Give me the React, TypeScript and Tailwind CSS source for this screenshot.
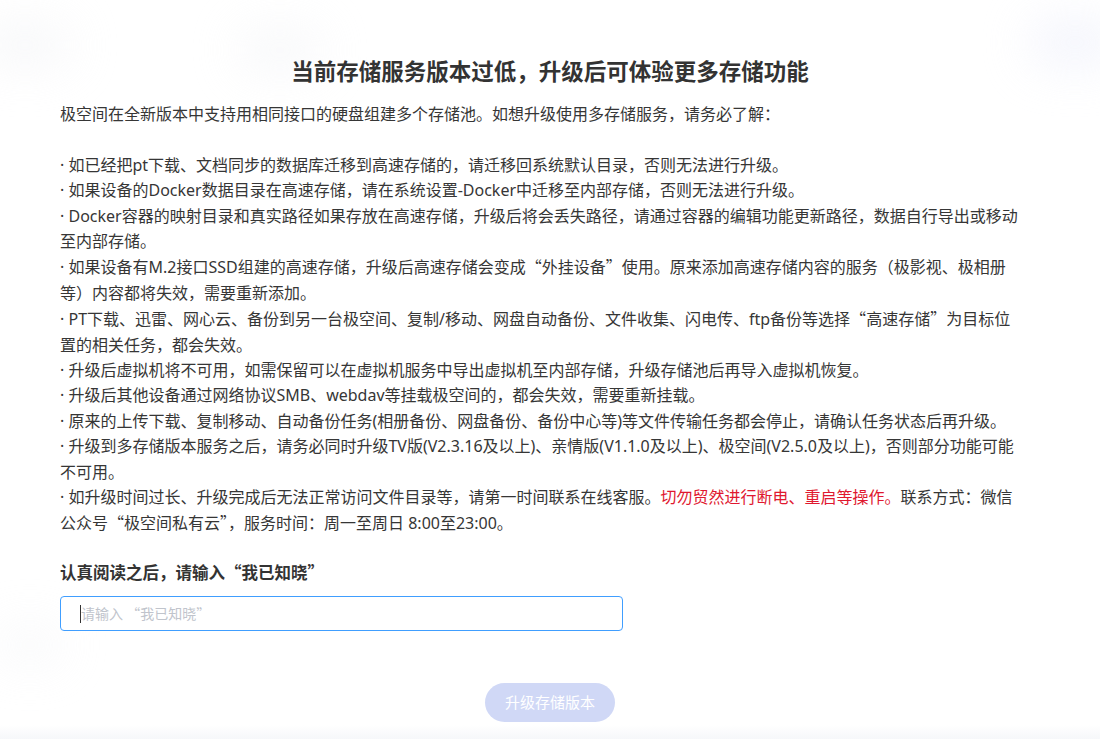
import React from "react";

// full-width CJK quotes, like the reference's font
function Q({ children }: { children: React.ReactNode }) {
  return (
    <span
      className="[font-feature-settings:'fwid']"
      style={{ fontFamily: '"Noto Sans CJK SC", sans-serif' }}
    >
      {children}
    </span>
  );
}

const bullets: React.ReactNode[] = [
  <>· 如已经把pt下载、文档同步的数据库迁移到高速存储的，请迁移回系统默认目录，否则无法进行升级。</>,
  <>· 如果设备的Docker数据目录在高速存储，请在系统设置-Docker中迁移至内部存储，否则无法进行升级。</>,
  <>
    · Docker容器的映射目录和真实路径如果存放在高速存储，升级后将会丢失路径，请通过容器的编辑功能更新路径，数据自行导出或移动
    <br />
    至内部存储。
  </>,
  <>
    · 如果设备有M.2接口SSD组建的高速存储，升级后高速存储会变成<Q>“</Q>外挂设备<Q>”</Q>使用。原来添加高速存储内容的服务（极影视、极相册
    <br />
    等）内容都将失效，需要重新添加。
  </>,
  <>
    · PT下载、迅雷、网心云、备份到另一台极空间、复制/移动、网盘自动备份、文件收集、闪电传、ftp备份等选择<Q>“</Q>高速存储<Q>”</Q>为目标位
    <br />
    置的相关任务，都会失效。
  </>,
  <>· 升级后虚拟机将不可用，如需保留可以在虚拟机服务中导出虚拟机至内部存储，升级存储池后再导入虚拟机恢复。</>,
  <>· 升级后其他设备通过网络协议SMB、webdav等挂载极空间的，都会失效，需要重新挂载。</>,
  <>· 原来的上传下载、复制移动、自动备份任务(相册备份、网盘备份、备份中心等)等文件传输任务都会停止，请确认任务状态后再升级。</>,
  <>
    · 升级到多存储版本服务之后，请务必同时升级TV版(V2.3.16及以上)、亲情版(V1.1.0及以上)、极空间(V2.5.0及以上)，否则部分功能可能
    <br />
    不可用。
  </>,
  <>
    · 如升级时间过长、升级完成后无法正常访问文件目录等，请第一时间联系在线客服。
    <span className="text-[#e0182f]">切勿贸然进行断电、重启等操作。</span>
    联系方式：微信
    <br />
    公众号<Q>“</Q>极空间私有云<Q>”</Q>，服务时间：周一至周日 8:00至23:00。
  </>,
];

export default function App() {
  return (
    <div
      lang="zh-CN"
      className="relative min-h-screen overflow-hidden bg-white text-[#333]"
      style={{ fontFamily: '"Noto Sans", "Noto Sans CJK SC", sans-serif' }}
    >
      {/* faint backdrop blobs */}
      <div className="pointer-events-none absolute left-[-20px] top-[25px] h-[40px] w-[90px] rounded-full bg-[#f1f2f5] opacity-60 blur-xl" />
      <div className="pointer-events-none absolute left-[240px] top-[30px] h-[40px] w-[80px] rounded-full bg-[#f1f2f5] opacity-60 blur-xl" />
      <div className="pointer-events-none absolute right-[-20px] top-[20px] h-[45px] w-[90px] rounded-full bg-[#eef0fb] opacity-70 blur-xl" />
      <div className="pointer-events-none absolute left-[0px] top-[630px] h-[30px] w-[60px] rounded-full bg-[#f1f2f5] opacity-60 blur-xl" />
      <div className="pointer-events-none absolute bottom-0 left-0 h-[14px] w-full bg-gradient-to-b from-white to-[#f6f7fa]" />

      <div className="relative flex flex-col px-[60px] pt-[55px]">
        <h1
          className="text-center text-[22.5px] font-bold leading-[30px] text-[#333]"
          style={{ fontFamily: '"Noto Sans CJK SC", sans-serif' }}
        >
          当前存储服务版本过低，升级后可体验更多存储功能
        </h1>

        <div className="mt-[17px] w-[1000px] text-[16px] leading-[25.4px] text-[#363636]">
          <p>极空间在全新版本中支持用相同接口的硬盘组建多个存储池。如想升级使用多存储服务，请务必了解：</p>
          <div className="mt-[25.4px]">
            {bullets.map((b, i) => (
              <p key={i}>{b}</p>
            ))}
          </div>
        </div>

        <p
          className="mt-[23px] text-[16.5px] font-bold leading-[24px] text-[#333]"
          style={{ fontFamily: '"Noto Sans CJK SC", sans-serif' }}
        >
          认真阅读之后，请输入<Q>“</Q>我已知晓<Q>”</Q>
        </p>

        <div className="relative mt-[12px] w-[563px]">
          <input
            placeholder="请输入 “我已知晓”"
            className="h-[35px] w-full rounded-[4px] border border-[#409eff] bg-white px-[20px] text-[14px] text-[#333] outline-none placeholder:text-[#c0c4cc]"
            style={{ fontFamily: '"Noto Sans CJK SC", sans-serif' }}
          />
          <span className="absolute left-[20px] top-[9px] h-[18px] w-px bg-[#333]" />
        </div>

        <div className="mt-[52px] flex justify-center">
          <button
            className="h-[39px] w-[130px] rounded-full bg-[#d0d8f6] text-[15px] text-white"
            style={{ fontFamily: '"Noto Sans CJK SC", sans-serif' }}
          >
            升级存储版本
          </button>
        </div>
      </div>
    </div>
  );
}
